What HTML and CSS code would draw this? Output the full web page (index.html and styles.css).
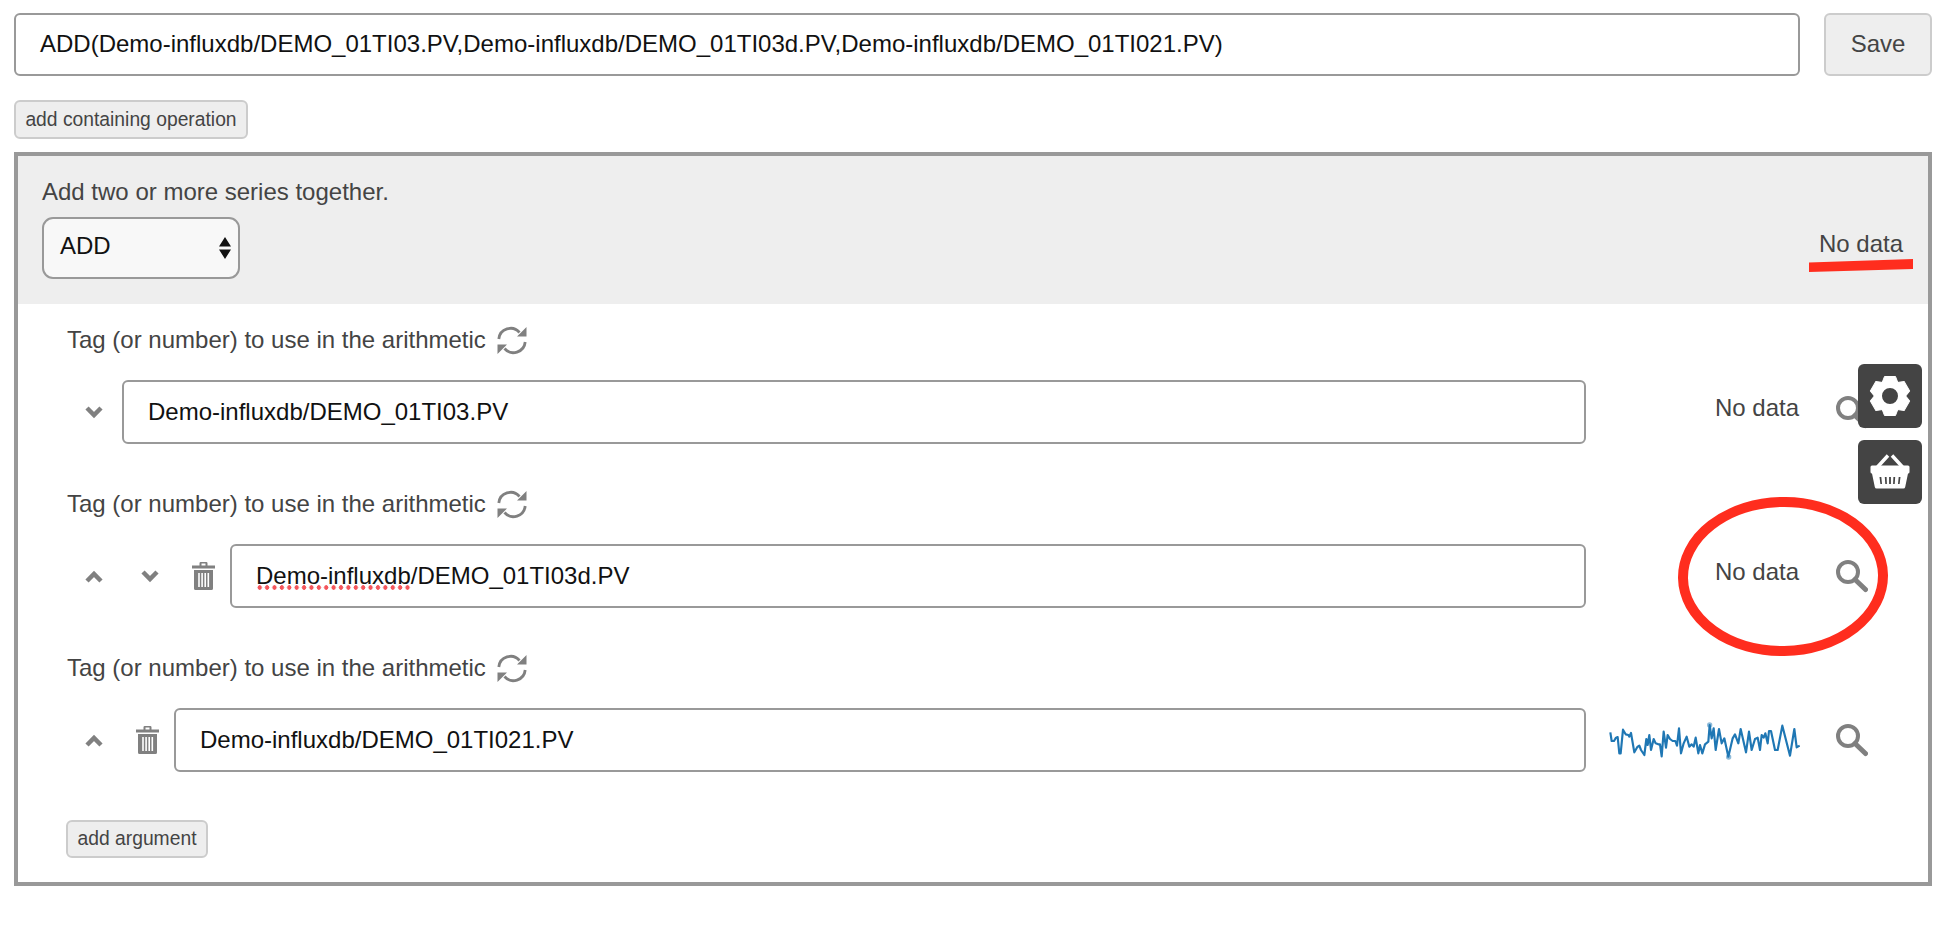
FILE: index.html
```html
<!DOCTYPE html>
<html lang="en">
<head>
<meta charset="utf-8">
<title>Expression editor</title>
<link rel="stylesheet" href="styles.css">
</head>
<body>
<svg class="defs" width="0" height="0" aria-hidden="true">
  <symbol id="i-search" viewBox="0 0 32 33"><circle cx="12" cy="12" r="10" fill="none" stroke="currentColor" stroke-width="4"/><path d="M19 19.500 29.500 29.500" fill="none" stroke="currentColor" stroke-width="5" stroke-linecap="round"/></symbol>
  <symbol id="i-up" viewBox="0 0 18 13"><path d="M2 11 9 4l7 7" fill="none" stroke="currentColor" stroke-width="4.500"/></symbol>
  <symbol id="i-down" viewBox="0 0 18 13"><path d="M2 2 9 9l7-7" fill="none" stroke="currentColor" stroke-width="4.500"/></symbol>
  <symbol id="i-trash" viewBox="0 0 23 28"><path d="M0 3.500h7.500V1.200Q7.500 0 8.700 0h5.600q1.200 0 1.200 1.200v2.300H23v3H0zM9.500 1.500v2h4v-2zM2 8h19v18.500q0 1.500-1.500 1.500h-16Q2 28 2 26.500zM6.200 11v14h1.600V11zm3.100 0v14h1.600V11zm3.100 0v14H14V11zm3.100 0v14h1.600V11z" fill="currentColor" fill-rule="evenodd"/></symbol>
  <symbol id="i-reload" viewBox="0 0 30 29"><path d="M1.800 13A11.800 11.800 0 0 1 22.500 6.500M28.200 16A11.800 11.800 0 0 1 7.500 22.500" fill="none" stroke="currentColor" stroke-width="2.800"/><path d="M29.500 1V10.500H20zM.5 28V18.500H10z" fill="currentColor"/></symbol>
</svg>

<div class="page">
  <div class="top-row">
    <div class="field top-field">ADD(Demo-influxdb/DEMO_01TI03.PV,Demo-influxdb/DEMO_01TI03d.PV,Demo-influxdb/DEMO_01TI021.PV)</div>
    <button class="btn save-btn">Save</button>
  </div>
  <button class="btn small-btn containing-btn">add containing operation</button>

  <section class="operation">
    <header class="op-head">
      <div class="op-left">
        <div class="op-desc">Add two or more series together.</div>
        <div class="select">
          <span>ADD</span>
          <svg class="select-arrows" width="12" height="22" viewBox="0 0 12 22"><path d="M6 0 12 9.500H0zM6 22 0 12.500h12z"/></svg>
        </div>
      </div>
      <div class="op-status">No data</div>
    </header>

    <div class="op-body">
      <div class="arg">
        <div class="arg-label">Tag (or number) to use in the arithmetic <svg class="ico reload"><use href="#i-reload"/></svg></div>
        <div class="arg-row">
          <span class="slot"><svg class="ico chev"><use href="#i-down"/></svg></span>
          <div class="field">Demo-influxdb/DEMO_01TI03.PV</div>
          <div class="status">No data</div>
          <svg class="ico search"><use href="#i-search"/></svg>
        </div>
      </div>

      <div class="arg">
        <div class="arg-label">Tag (or number) to use in the arithmetic <svg class="ico reload"><use href="#i-reload"/></svg></div>
        <div class="arg-row">
          <span class="slot"><svg class="ico chev"><use href="#i-up"/></svg></span>
          <span class="slot"><svg class="ico chev"><use href="#i-down"/></svg></span>
          <span class="slot slot-trash"><svg class="ico trash"><use href="#i-trash"/></svg></span>
          <div class="field"><span class="misspelt">Demo-influxdb</span>/DEMO_01TI03d.PV</div>
          <div class="status">No data</div>
          <svg class="ico search"><use href="#i-search"/></svg>
        </div>
      </div>

      <div class="arg">
        <div class="arg-label">Tag (or number) to use in the arithmetic <svg class="ico reload"><use href="#i-reload"/></svg></div>
        <div class="arg-row">
          <span class="slot"><svg class="ico chev"><use href="#i-up"/></svg></span>
          <span class="slot slot-trash"><svg class="ico trash"><use href="#i-trash"/></svg></span>
          <div class="field">Demo-influxdb/DEMO_01TI021.PV</div>
          <div class="status">
            <svg class="spark" viewBox="0 0 600 150">
              <polyline class="spark-line" points="16,52 20,78 27,78 33,68 38,66 43,115 47,115 54,44 62,58 70,60 73,65 78,54 88,112 97,96 103,92 108,105 118,120 124,72 128,90 133,60 138,105 146,72 152,85 160,88 165,88 170,124 176,50 183,98 188,60 195,72 203,78 211,78 216,92 222,40 228,115 236,85 245,65 253,95 260,88 266,95 272,68 280,115 285,90 292,115 300,88 310,80 314,30 320,70 326,40 332,105 342,42 350,85 358,70 370,125 383,70 390,58 400,85 407,42 423,112 432,50 440,105 450,72 458,68 465,105 470,60 476,68 481,55 488,85 492,48 498,48 510,105 518,105 532,32 555,122 568,42 575,97 584,92"/>
              <circle class="spark-dot" cx="314" cy="30" r="8"/>
              <circle class="spark-dot" cx="371" cy="126" r="8"/>
            </svg>
          </div>
          <svg class="ico search"><use href="#i-search"/></svg>
        </div>
      </div>

      <button class="btn small-btn add-arg-btn">add argument</button>
    </div>
  </section>

  <div class="float-tools">
    <button class="tool" aria-label="Settings">
      <svg width="64" height="64" viewBox="-32 -32 64 64">
        <circle r="12" fill="none" stroke="#fff" stroke-width="8"/>
        <g fill="#fff" stroke="#fff" stroke-linejoin="round">
          <path d="M-8-13-5.500-19.500H5.500L8-13z"/>
          <path d="M-8-13-5.500-19.500H5.500L8-13z" transform="rotate(60)"/>
          <path d="M-8-13-5.500-19.500H5.500L8-13z" transform="rotate(120)"/>
          <path d="M-8-13-5.500-19.500H5.500L8-13z" transform="rotate(180)"/>
          <path d="M-8-13-5.500-19.500H5.500L8-13z" transform="rotate(240)"/>
          <path d="M-8-13-5.500-19.500H5.500L8-13z" transform="rotate(300)"/>
        </g>
      </svg>
    </button>
    <button class="tool" aria-label="Basket">
      <svg width="64" height="64" viewBox="0 0 64 64">
        <path d="M19.500 27 30 15.500M44.500 27 34 15.500" fill="none" stroke="#fff" stroke-width="3.400"/>
        <path d="M14 25.500h36q1.500 0 1.500 1.500v5q0 1.500-1.500 1.500l-2.800 13.500q-.3 1.500-1.800 1.500H18.600q-1.500 0-1.800-1.500L14 33.500q-1.500 0-1.500-1.500v-5q0-1.500 1.500-1.500z" fill="#fff"/>
        <path d="M21.500 37h1.800l.7 7h-1.600zM26.800 37h1.800l.3 7h-1.600zM31.100 37h1.800v7h-1.800zM35.400 37h1.800l-.5 7h-1.600zM40.700 37h1.800l-.9 7H40z" fill="#444"/>
      </svg>
    </button>
  </div>

  <svg class="mark mark-line" width="104" height="13" viewBox="0 0 104 13"><path d="M0 3.500 104 0V10L0 13z"/></svg>
  <svg class="mark mark-ring" width="210" height="159" viewBox="0 0 210 159"><ellipse cx="105" cy="79.500" rx="100" ry="74.500" transform="rotate(-1 105 79.500)"/></svg>
</div>
</body>
</html>
```

FILE: styles.css
```css
* { box-sizing: border-box; }

html, body {
  margin: 0;
  height: 100%;
  overflow: hidden;
  background: #fff;
}

body {
  font-family: "Liberation Sans", Arial, sans-serif;
  font-size: 24px;
  color: #444;
}

.defs { position: absolute; }

.page {
  position: relative;
  padding: 13px 12px 0 14px;
}

.top-row {
  display: flex;
  gap: 24px;
  margin-bottom: 24px;
}

.field {
  flex: 1;
  height: 64px;
  display: flex;
  align-items: center;
  padding: 0 24px;
  background: #fff;
  border: 2px solid #999;
  border-radius: 6px;
  color: #111;
  white-space: pre;
}

.top-row .field {
  height: 63px;
  padding-bottom: 2px;
}

.btn {
  font-family: inherit;
  color: #444;
  background: #eee;
  border: 2px solid #ccc;
  border-radius: 6px;
  cursor: pointer;
  padding: 0;
}

.save-btn {
  width: 108px;
  height: 63px;
  font-size: 24px;
  padding-bottom: 2px;
}

.small-btn {
  font-size: 19.300px;
  height: 39px;
  display: block;
}

.containing-btn { width: 234px; }

.add-arg-btn { width: 142px; height: 38px; }

.operation {
  margin-top: 13px;
  height: 734px;
  border: 4px solid #999;
}

.op-head {
  height: 148px;
  background: #eee;
  padding: 21px 24px 0 24px;
  display: flex;
  justify-content: space-between;
}

.op-desc {
  line-height: 30px;
  margin-bottom: 10px;
}

.select {
  width: 198px;
  height: 62px;
  display: flex;
  align-items: center;
  justify-content: space-between;
  padding: 0 7px 0 16px;
  background: #f8f8f8;
  border: 2px solid #999;
  border-radius: 11px;
  color: #111;
}

.select span { margin-top: -4px; }

.select-arrows { fill: #111; }

.op-status {
  align-self: flex-end;
  margin: 0 1px 47px 0;
  line-height: 26px;
}

.op-body { padding: 16px 0 0 48px; }

.arg { margin-bottom: 40px; }
.arg:nth-of-type(3) { margin-bottom: 48px; }

.arg-label {
  height: 40px;
  margin-bottom: 20px;
  padding-left: 1px;
  display: flex;
  align-items: center;
  gap: 4px;
  white-space: pre;
}

.arg-row {
  display: flex;
  align-items: center;
  padding-right: 60px;
}

.slot {
  width: 56px;
  flex: none;
  display: flex;
  justify-content: center;
}

.slot-trash {
  width: 52px;
  padding-right: 2px;
}

.ico { color: #808080; flex: none; display: block; }
.chev { width: 18px; height: 13px; }
.trash { width: 23px; height: 28px; }
.reload { width: 30px; height: 29px; }
.search { width: 32px; height: 33px; }

.status {
  width: 250px;
  flex: none;
  display: flex;
  justify-content: flex-end;
  padding: 0 37px 8px 0;
}

.status:has(.spark) { padding-bottom: 0; }

.spark {
  width: 200px;
  height: 50px;
  margin-right: -6px;
}

.spark-line {
  fill: none;
  stroke: #1f77b4;
  stroke-width: 6.500;
  stroke-linejoin: round;
}

.spark-dot {
  fill: #1f77b4;
  opacity: .5;
}

.misspelt {
  display: inline-block;
  background-image: radial-gradient(circle, #f4555b 2px, transparent 2.500px);
  background-size: 7.400px 5px;
  background-repeat: repeat-x;
  background-position: 0 100%;
}

.float-tools {
  position: absolute;
  left: 1858px;
  top: 364px;
  display: flex;
  flex-direction: column;
  gap: 12px;
}

.tool {
  width: 64px;
  height: 64px;
  padding: 0;
  border: 0;
  border-radius: 6px;
  background: #444;
  display: block;
}

.tool svg { display: block; }

.mark { position: absolute; }
.mark-line { left: 1809px; top: 259px; }
.mark-line path { fill: #ff2d1e; }
.mark-ring { left: 1678px; top: 497px; }
.mark-ring ellipse { fill: none; stroke: #ff2d1e; stroke-width: 10; }
```
